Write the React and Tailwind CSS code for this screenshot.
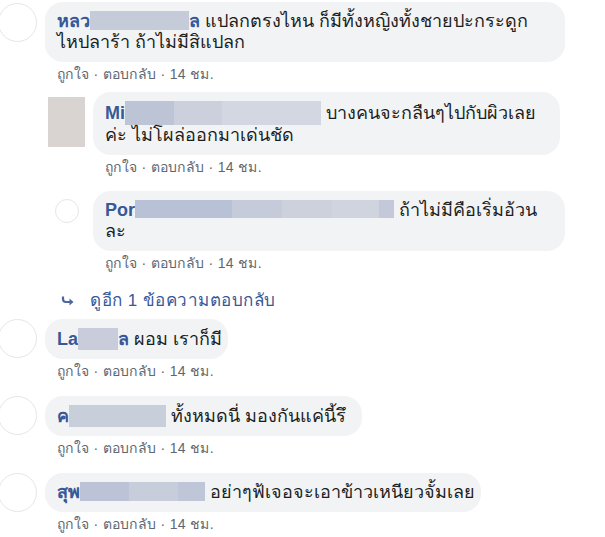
const NAME = 'text-[#385898] font-bold'

function Blur({ segs, className = 'h-[22px] align-[-5px]' }) {
  return (
    <span className={`inline-flex ${className}`}>
      {segs.map((c, i) => (
        <span key={i} className={c} />
      ))}
    </span>
  )
}

function Actions({ className = '' }) {
  return (
    <div className={`text-[14px] leading-[16px] tracking-[0.3px] text-[#606770] ${className}`}>
      ถูกใจ · ตอบกลับ · 14 ชม.
    </div>
  )
}

function Circle({ className }) {
  return <div className={`shrink-0 rounded-full border border-[#e4e6ea] bg-white ${className}`} />
}

export default function App() {
  return (
    <div
      className="w-[605px] h-[537px] overflow-hidden bg-white text-[#1c1e21] text-[18px] leading-[21px]"
      style={{ fontFamily: '"Liberation Sans", Tahoma, "Noto Sans", sans-serif' }}
    >
      {/* comment 1 */}
      <div className="flex items-start pt-[2px]">
        <Circle className="w-[39px] h-[39px] ml-[-2px] mt-[1px]" />
        <div className="ml-[8px]">
          <div className="w-[520px] rounded-[18px] bg-[#f2f3f5] px-[12px] py-[9px] whitespace-nowrap">
            <span className={NAME}>หลว</span>
            <Blur segs={['w-[99px] bg-[#c6cbd9]']} className="h-[19px] align-[-3px]" />
            <span className={NAME}>ล</span> แปลกตรงไหน ก็มีทั้งหญิงทั้งชายปะกระดูก
            <br />
            ไหปลาร้า ถ้าไม่มีสิแปลก
          </div>
          <Actions className="pl-[12px] mt-[4px]" />
        </div>
      </div>

      {/* replies */}
      <div className="pl-[48px]">
        <div className="flex items-start mt-[10px]">
          <div className="w-[37px] h-[50px] mt-[5px] shrink-0 bg-[#d9d4d1]" />
          <div className="ml-[8px]">
            <div className="w-[467px] rounded-[18px] bg-[#f2f3f5] px-[12px] py-[9px] whitespace-nowrap">
              <span className={NAME}>Mi</span>
              <Blur
                segs={['w-[49px] bg-[#bdc4d6]', 'w-[48px] bg-[#cbd0dc]', 'w-[99px] bg-[#d3d7e1]']}
                className="h-[24px] align-[-6px]"
              />{' '}
              บางคนจะกลืนๆไปกับผิวเลย
              <br />
              ค่ะ ไม่โผล่ออกมาเด่นชัด
            </div>
            <Actions className="pl-[12px] mt-[4px]" />
          </div>
        </div>

        <div className="flex items-start mt-[16px]">
          <div className="w-[37px] shrink-0 flex justify-center pt-[8px]">
            <Circle className="w-[24px] h-[24px]" />
          </div>
          <div className="ml-[8px]">
            <div className="w-[472px] rounded-[18px] bg-[#f2f3f5] px-[12px] py-[9px] whitespace-nowrap">
              <span className={NAME}>Por</span>
              <Blur
                segs={[
                  'w-[97px] bg-[#b8c1d6]',
                  'w-[50px] bg-[#c6cbd9]',
                  'w-[50px] bg-[#cdd1dc]',
                  'w-[47px] bg-[#d0d4de]',
                  'w-[15px] bg-[#c3c9d9]',
                ]}
                className="h-[18px] align-[-2px]"
              />{' '}
              ถ้าไม่มีคือเริ่มอ้วน
              <br />
              ละ
            </div>
            <Actions className="pl-[12px] mt-[4px]" />
          </div>
        </div>

        <div className="flex items-center mt-[21px] text-[17px] leading-[18px] tracking-[0.5px] text-[#385898]">
          <svg width="14" height="12" viewBox="0 0 14 12" className="ml-[13px] mr-[15px]">
            <path d="M2 1.5 V4 Q2 7 5 7 H9" fill="none" stroke="#4b67a1" strokeWidth="2.2" />
            <path d="M8.5 3.5 L12.5 7 L8.5 10.5 Z" fill="#4b67a1" />
          </svg>
          <span>ดูอีก 1 ข้อความตอบกลับ</span>
        </div>
      </div>

      {/* comment 4 */}
      <div className="flex items-start mt-[9px]">
        <Circle className="w-[39px] h-[39px] ml-[-2px]" />
        <div className="ml-[8px]">
          <div className="w-[183px] rounded-[18px] bg-[#f2f3f5] px-[12px] py-[9px] whitespace-nowrap">
            <span className={NAME}>La</span>
            <Blur segs={['w-[40px] bg-[#c9cddb]']} />
            <span className={NAME}>ล</span> ผอม เราก็มี
          </div>
          <Actions className="pl-[12px] mt-[4px]" />
        </div>
      </div>

      {/* comment 5 */}
      <div className="flex items-start mt-[17px]">
        <Circle className="w-[39px] h-[39px] ml-[-2px]" />
        <div className="ml-[8px]">
          <div className="w-[317px] rounded-[18px] bg-[#f2f3f5] px-[12px] py-[9px] whitespace-nowrap">
            <span className={NAME}>ค</span>
            <Blur segs={['w-[97px] bg-[#c9cedb]']} />{' '}
            ทั้งหมดนี่ มองกันแค่นี้รึ
          </div>
          <Actions className="pl-[12px] mt-[4px]" />
        </div>
      </div>

      {/* comment 6 */}
      <div className="flex items-start mt-[17px]">
        <Circle className="w-[39px] h-[39px] ml-[-2px]" />
        <div className="ml-[8px]">
          <div className="w-[436px] rounded-[18px] bg-[#f2f3f5] px-[12px] py-[9px] whitespace-nowrap">
            <span className={NAME}>สุพ</span>
            <Blur
              segs={['w-[49px] bg-[#bcc3d6]', 'w-[49px] bg-[#c8cddb]', 'w-[27px] bg-[#bfc6d8]']}
              className="h-[19px] align-[-3px]"
            />{' '}
            อย่าๆฟ้เจอจะเอาข้าวเหนียวจั้มเลย
          </div>
          <Actions className="pl-[12px] mt-[4px]" />
        </div>
      </div>
    </div>
  )
}
